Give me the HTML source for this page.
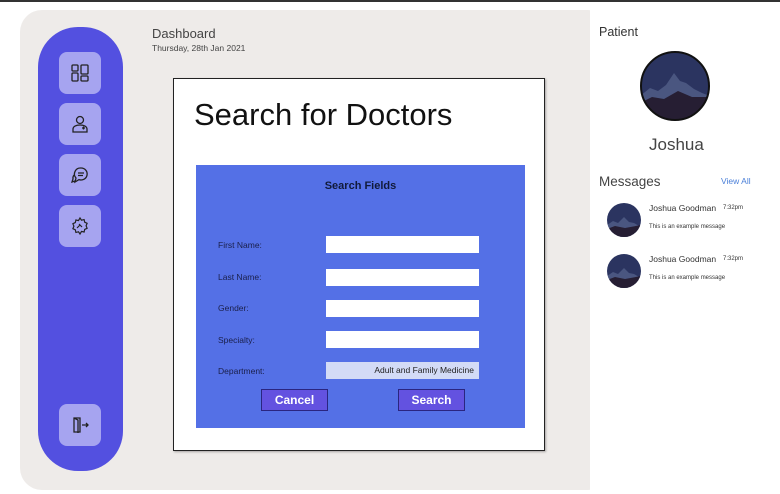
<!DOCTYPE html>
<html><head><meta charset="utf-8"><style>
*{margin:0;padding:0;box-sizing:border-box}
body{width:780px;height:494px;background:#fff;position:relative;overflow:hidden;font-family:"Liberation Sans",sans-serif}
.abs{position:absolute}
.topline{left:0;top:0;width:780px;height:2px;background:#333}
.panel{left:20px;top:10px;width:590px;height:480px;background:#eeebe9;border-radius:22px}
.right{left:590px;top:2px;width:190px;height:492px;background:#fff}
.side{left:38px;top:27px;width:85px;height:444px;background:#5350e0;border-radius:40px}
.btn{left:59px;width:42px;height:42px;background:#a6a4f0;border-radius:8px;display:flex;align-items:center;justify-content:center}
.card{left:173px;top:78px;width:372px;height:373px;background:#fff;border:1.5px solid #222;box-shadow:1px 1px 2px rgba(0,0,0,.3)}
.blue{left:196px;top:165px;width:329px;height:263px;background:#5470e6}
.lbl{left:218px;font-size:8.5px;color:#1a1f4a}
.inp{left:326px;width:153px;height:17px;background:#fff}
.b2{top:389px;width:67px;height:22px;background:#6352e0;border:1px solid #2a2580;color:#fff;font-weight:bold;font-size:12px;text-align:center;line-height:20px}
.sm{font-size:8.5px;color:#333}
</style></head><body>
<div class="abs topline"></div>
<div class="abs panel"></div>
<div class="abs right"></div>
<div class="abs side"></div>
<div class="abs btn" style="top:52px"><svg width="20" height="20" viewBox="0 0 20 20" fill="none" stroke="#222" stroke-width="1.3"><rect x="2" y="2" width="6" height="6" rx="1"/><rect x="2" y="10" width="6" height="8" rx="1"/><rect x="11" y="2" width="7" height="9" rx="1"/><rect x="11" y="13" width="7" height="5" rx="1"/></svg></div>
<div class="abs btn" style="top:103px"><svg width="20" height="20" viewBox="0 0 20 20" fill="none" stroke="#222" stroke-width="1.3"><circle cx="10" cy="6" r="3.5"/><path d="M3 18v-3c0-2.5 3-4 7-4s7 1.5 7 4v3z"/><path d="M12 14h3M13.5 12.5v3"/></svg></div>
<div class="abs btn" style="top:154px"><svg width="20" height="20" viewBox="0 0 20 20" fill="none" stroke="#222" stroke-width="1.3"><path d="M11 3a6 6 0 1 1-2 11.6L5 17l1-4A6 6 0 0 1 11 3z"/><path d="M8 8h6M8 10.5h5"/><path d="M4 10a5 5 0 0 0-1 4l-1 3 3-1"/></svg></div>
<div class="abs btn" style="top:205px"><svg width="20" height="20" viewBox="0 0 20 20" fill="none" stroke="#222" stroke-width="1.2"><path d="M10 2l1.5 2.2 2.6-.6.6 2.6 2.4 1.1-1 2.5 1 2.5-2.4 1.1-.6 2.6-2.6-.6L10 18l-1.5-2.2-2.6.6-.6-2.6L2.9 12.7l1-2.5-1-2.5L5.3 6.6l.6-2.6 2.6.6z"/><path d="M7 12l3-3M9 8l3 3"/></svg></div>
<div class="abs btn" style="top:404px"><svg width="20" height="20" viewBox="0 0 20 20" fill="none" stroke="#222" stroke-width="1.3"><path d="M4 3h6v14H4z"/><path d="M4 3l4 2v13"/><path d="M12 10h6M16 8l2 2-2 2"/></svg></div>
<div class="abs" style="left:152px;top:26px;font-size:13px;color:#444">Dashboard</div>
<div class="abs" style="left:152px;top:43px;font-size:8.5px;color:#444">Thursday, 28th Jan 2021</div>
<div class="abs card"></div>
<div class="abs" style="left:194px;top:97px;font-size:31px;color:#111">Search for Doctors</div>
<div class="abs blue"></div>
<div class="abs" style="left:196px;top:180px;width:329px;text-align:center;font-size:11px;font-weight:bold;color:#111a3a">Search Fields</div>
<div class="abs lbl" style="top:240px">First Name:</div><div class="abs inp" style="top:236px"></div>
<div class="abs lbl" style="top:272px">Last Name:</div><div class="abs inp" style="top:269px"></div>
<div class="abs lbl" style="top:303px">Gender:</div><div class="abs inp" style="top:300px"></div>
<div class="abs lbl" style="top:335px">Specialty:</div><div class="abs inp" style="top:331px"></div>
<div class="abs lbl" style="top:366px">Department:</div><div class="abs inp" style="top:362px;background:#d3dbf6;font-size:8.5px;color:#222;text-align:right;padding-right:5px;line-height:17px">Adult and Family Medicine</div>
<div class="abs b2" style="left:261px">Cancel</div>
<div class="abs b2" style="left:398px">Search</div>
<svg width="0" height="0" style="position:absolute"><defs><linearGradient id="sky" x1="0" y1="0" x2="0" y2="1"><stop offset="0" stop-color="#2a3560"/><stop offset="1" stop-color="#1e2440"/></linearGradient></defs></svg>
<div class="abs" style="left:599px;top:25px;font-size:12.5px;color:#333">Patient</div>
<svg class="abs" style="left:640px;top:51px" width="70" height="70" viewBox="0 0 70 70"><clipPath id="c1"><circle cx="35" cy="35" r="34"/></clipPath><g clip-path="url(#c1)"><rect width="70" height="70" fill="#2b3460"/><path d="M0 45l10-8 8 3 8-6 8-12 6 8 6 2 8 6 8 4 8 3v35H0z" fill="#4a5680"/><path d="M0 52l12-6 12 2 14-8 14 6 18 0v24H0z" fill="#261e33"/></g><circle cx="35" cy="35" r="34" fill="none" stroke="#111" stroke-width="2"/></svg>
<div class="abs" style="left:649px;top:135px;font-size:17px;color:#444">Joshua</div>
<div class="abs" style="left:599px;top:174px;font-size:13.5px;color:#444">Messages</div>
<div class="abs" style="left:721px;top:176px;font-size:8.5px;color:#4a7fd8">View All</div>
<svg class="abs" style="left:607px;top:203px" width="34" height="34" viewBox="0 0 34 34"><clipPath id="c2"><circle cx="17" cy="17" r="17"/></clipPath><g clip-path="url(#c2)"><rect width="34" height="34" fill="#2b3460"/><path d="M0 22l6-4 5 2 6-6 5 5 5 1 7 4v14H0z" fill="#4a5680"/><path d="M0 26l8-3 10 2 16-3v12H0z" fill="#261e33"/></g></svg>
<svg class="abs" style="left:607px;top:254px" width="34" height="34" viewBox="0 0 34 34"><clipPath id="c3"><circle cx="17" cy="17" r="17"/></clipPath><g clip-path="url(#c3)"><rect width="34" height="34" fill="#2b3460"/><path d="M0 22l6-4 5 2 6-6 5 5 5 1 7 4v14H0z" fill="#4a5680"/><path d="M0 26l8-3 10 2 16-3v12H0z" fill="#261e33"/></g></svg>
<div class="abs sm" style="left:649px;top:203px">Joshua Goodman</div>
<div class="abs" style="left:723px;top:205px;font-size:6px;color:#333">7:32pm</div>
<div class="abs" style="left:649px;top:224px;font-size:6px;color:#333">This is an example message</div>
<div class="abs sm" style="left:649px;top:254px">Joshua Goodman</div>
<div class="abs" style="left:723px;top:256px;font-size:6px;color:#333">7:32pm</div>
<div class="abs" style="left:649px;top:275px;font-size:6px;color:#333">This is an example message</div>
</body></html>
